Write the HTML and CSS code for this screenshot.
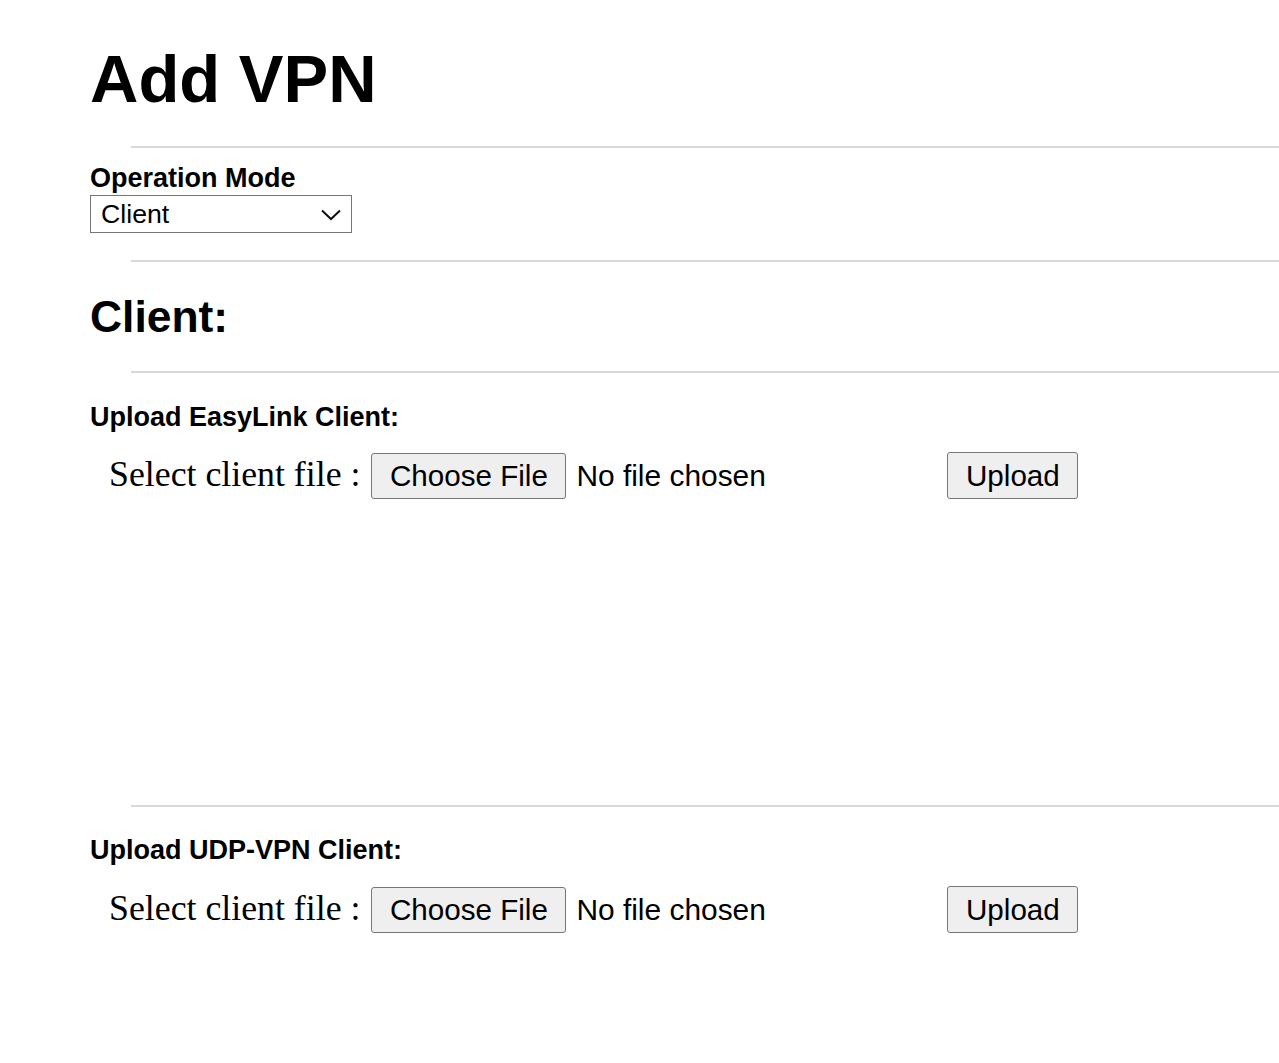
FILE: index.html
```html
<!DOCTYPE html>
<html>
<head>
<meta charset="utf-8">
<title>Add VPN</title>
<link rel="stylesheet" href="styles.css">
</head>
<body>
<div class="page">
  <h1 class="title">Add VPN</h1>
  <div class="rule rule-1"></div>

  <div class="field">
    <div class="label label-mode">Operation Mode</div>
    <div class="select">
      <span class="select-value">Client</span>
      <svg class="chevron" width="20" height="12" viewBox="0 0 20 12">
        <polyline points="1,1.5 10,10 19,1.5" fill="none" stroke="#111" stroke-width="2"/>
      </svg>
    </div>
  </div>
  <div class="rule rule-2"></div>

  <h2 class="section">Client:</h2>
  <div class="rule rule-3"></div>

  <div class="label label-upload">Upload EasyLink Client:</div>
  <div class="file-row row-1">
    <span class="file-caption">Select client file :</span>
    <div class="file-input">
      <span class="btn btn-choose">Choose File</span>
      <span class="file-status">No file chosen</span>
    </div>
    <span class="btn btn-upload">Upload</span>
  </div>

  <div class="rule rule-4"></div>

  <div class="label label-upload2">Upload UDP-VPN Client:</div>
  <div class="file-row row-2">
    <span class="file-caption">Select client file :</span>
    <div class="file-input">
      <span class="btn btn-choose">Choose File</span>
      <span class="file-status">No file chosen</span>
    </div>
    <span class="btn btn-upload">Upload</span>
  </div>
</div>
</body>
</html>
```

FILE: styles.css
```css
html, body {
  margin: 0;
  padding: 0;
  background: #ffffff;
  color: #000000;
  font-family: "Liberation Sans", Arial, sans-serif;
}

.page {
  padding: 45px 0 0 90px;
  overflow: hidden;
}

.title {
  margin: 0;
  font-size: 67px;
  line-height: 67px;
  font-weight: bold;
}

.rule {
  height: 2px;
  background: #d9d9d9;
  margin-left: 41px;
}

.rule-1 { margin-top: 34px; }
.rule-2 { margin-top: 27px; }
.rule-3 { margin-top: 29px; }
.rule-4 { margin-top: 306px; }

.label {
  font-size: 27px;
  line-height: 30px;
  font-weight: bold;
}

.label-mode { margin-top: 15px; }
.label-upload { margin-top: 29px; }
.label-upload2 { margin-top: 28px; }

.select {
  margin-top: 2px;
  width: 262px;
  height: 38px;
  box-sizing: border-box;
  border: 1px solid #767676;
  display: flex;
  align-items: center;
  justify-content: space-between;
  padding: 0 10px 0 10px;
}

.select-value {
  font-size: 26.7px;
  line-height: 30px;
}

.chevron {
  display: block;
  margin-top: 2px;
}

.section {
  margin: 30px 0 0 0;
  font-size: 44.4px;
  line-height: 50px;
  font-weight: bold;
}

.file-row {
  display: flex;
  align-items: baseline;
  padding-left: 19px;
}

.row-1 { margin-top: 20px; }
.row-2 { margin-top: 21px; }

.file-caption {
  font-family: "Liberation Serif", "Times New Roman", serif;
  font-size: 35.8px;
  margin-right: 11px;
}

.file-input {
  display: flex;
  align-items: baseline;
  width: 576px;
}

.btn {
  display: inline-flex;
  align-items: center;
  box-sizing: border-box;
  height: 46px;
  padding: 0 17.5px;
  border: 1px solid #767676;
  border-radius: 3px;
  background: #efefef;
  font-size: 29.6px;
  line-height: 34px;
  color: #000;
}

.btn-upload {
  height: 47px;
}

.file-status {
  font-size: 29.9px;
  line-height: 34px;
  margin-left: 10px;
}
```
